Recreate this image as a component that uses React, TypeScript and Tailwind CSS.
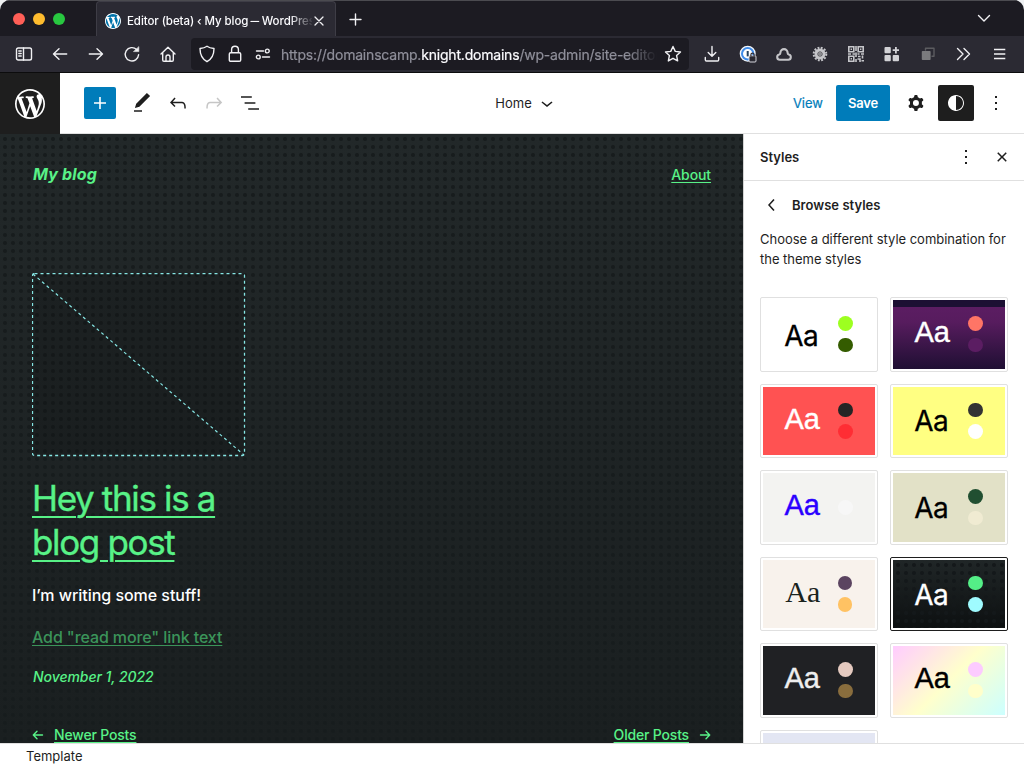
import React from "react";

type IconProps = { d: string; size?: number; className?: string };

function WpIcon({ d, size = 24, className = "" }: IconProps) {
  return (
    <svg viewBox="0 0 24 24" width={size} height={size} className={"shrink-0 " + className} fill="currentColor">
      <path fillRule="evenodd" clipRule="evenodd" d={d} />
    </svg>
  );
}

const icons = {
  plus: "M18 11.2h-5.2V6h-1.6v5.2H6v1.6h5.2V18h1.6v-5.2H18z",
  edit: "M20.1 5.1L16.9 2 6.2 12.7l-1.3 4.4 4.5-1.3L20.1 5.1zM4 20.8h8v-1.5H4v1.5z",
  undo: "M18.3 11.7c-.6-.6-1.4-.9-2.3-.9H6.7l2.9-3.3-1.1-1-4.5 5L8.5 16l1-1-2.7-2.7H16c.5 0 .9.2 1.3.5 1 1 1 3.4 1 4.5v.3h1.5v-.2c0-1.5 0-4.3-1.5-5.7z",
  redo: "M15.6 6.5l-1.1 1 2.9 3.3H8c-.9 0-1.7.3-2.3.9-1.4 1.5-1.4 4.2-1.4 5.6v.2h1.5v-.3c0-1.1 0-3.5 1-4.5.3-.3.7-.5 1.3-.5h9.2L14.5 15l1.1 1.1 4.6-4.6-4.6-5z",
  list: "M13.8 5.2H3v1.5h10.8V5.2zm-3.6 12v1.5H21v-1.5H10.2zm7.2-6H6.6v1.5h10.8v-1.5z",
  chevronDown: "M17.5 11.6L12 16l-5.5-4.4.9-1.2L12 14l4.5-3.6 1 1.2z",
  chevronLeft: "M14.6 7l-1.2-1L8 12l5.4 6 1.2-1-4.6-5z",
  cog: "M10.289 4.836A1 1 0 0111.275 4h1.306a1 1 0 01.987.836l.244 1.466c.787.26 1.503.679 2.108 1.218l1.393-.522a1 1 0 011.216.437l.653 1.13a1 1 0 01-.23 1.273l-1.148.944a6.025 6.025 0 010 2.435l1.149.946a1 1 0 01.23 1.272l-.653 1.13a1 1 0 01-1.216.437l-1.394-.522c-.605.54-1.32.958-2.108 1.218l-.244 1.466a1 1 0 01-.987.836h-1.306a1 1 0 01-.986-.836l-.244-1.466a5.995 5.995 0 01-2.108-1.218l-1.394.522a1 1 0 01-1.217-.436l-.653-1.131a1 1 0 01.23-1.272l1.149-.946a6.026 6.026 0 010-2.435l-1.148-.944a1 1 0 01-.23-1.272l.653-1.131a1 1 0 011.217-.437l1.393.522a5.994 5.994 0 012.108-1.218l.244-1.466zM14.929 12a3 3 0 11-6 0 3 3 0 016 0z",
  styles: "M12 4c-4.4 0-8 3.6-8 8v.1c0 4.1 3.2 7.5 7.2 7.9h.8c4.4 0 8-3.6 8-8s-3.6-8-8-8zm0 15V5c3.9 0 7 3.1 7 7s-3.1 7-7 7z",
  more: "M13 19h-2v-2h2v2zm0-6h-2v-2h2v2zm0-6h-2V5h2v2z",
  close: "M12 13.06l3.712 3.713 1.061-1.06L13.061 12l3.712-3.712-1.06-1.06L12 10.938 8.288 7.227l-1.061 1.06L10.939 12l-3.712 3.712 1.06 1.061L12 13.061z",
};

const wordpressPath =
  "M20 10c0-5.51-4.49-10-10-10C4.48 0 0 4.49 0 10c0 5.52 4.48 10 10 10 5.51 0 10-4.48 10-10zM7.78 15.37L4.37 6.22c.55-.02 1.17-.08 1.17-.08.5-.06.44-1.13-.06-1.11 0 0-1.45.11-2.37.11-.18 0-.37 0-.58-.01C4.12 2.69 6.87 1.11 10 1.11c2.33 0 4.45.87 6.05 2.34-.68-.11-1.65.39-1.65 1.58 0 .74.45 1.36.9 2.1.35.61.55 1.36.55 2.46 0 1.49-1.4 5-1.4 5l-3.03-8.37c.54-.02.82-.17.82-.17.5-.05.44-1.25-.06-1.22 0 0-1.44.12-2.38.12-.87 0-2.33-.12-2.33-.12-.5-.03-.56 1.2-.06 1.22l.92.08 1.26 3.41zM17.41 10c.24-.64.74-1.87.43-4.25.7 1.29 1.05 2.71 1.05 4.25 0 3.29-1.73 6.24-4.4 7.78.97-2.59 1.94-5.2 2.92-7.78zM6.1 18.09C3.12 16.65 1.11 13.53 1.11 10c0-1.3.23-2.48.72-3.59C3.25 10.3 4.67 14.2 6.1 18.09zm4.03-6.63l2.58 6.98c-.86.29-1.76.45-2.71.45-.79 0-1.57-.11-2.29-.33.81-2.38 1.63-4.74 2.42-7.1z";

function ToolIcon({ children, className = "" }: { children: React.ReactNode; className?: string }) {
  return (
    <div className={"flex w-9 shrink-0 items-center justify-center " + className}>
      <svg width="18" height="18" viewBox="0 0 18 18" fill="none" stroke="#f1f1f4" strokeWidth="1.4" strokeLinecap="round" strokeLinejoin="round">
        {children}
      </svg>
    </div>
  );
}

function TabStrip() {
  return (
    <div className="flex h-9 shrink-0 border-t border-[#4b4b50] bg-[#1c1b22]">
      <div className="flex w-24 shrink-0 items-center gap-2 pl-[13px]">
        <span className="size-3 rounded-full bg-[#ff5f57]" />
        <span className="size-3 rounded-full bg-[#febc2e]" />
        <span className="size-3 rounded-full bg-[#28c840]" />
      </div>
      <div className="flex w-60 shrink-0 items-center rounded-t-[4px] border-x border-t border-[#3e3d46] bg-[#2b2a33] pt-1 pl-2">
        <svg width="16" height="16" viewBox="0 0 20 20" className="shrink-0">
          <circle cx="10" cy="10" r="9.8" fill="#0073aa" />
          <path d={wordpressPath} fill="#fff" />
        </svg>
        <span className="mt-px ml-[6px] w-[185px] overflow-hidden text-[11.5px] font-medium tracking-[-0.08px] whitespace-nowrap text-[#fbfbfe] [mask-image:linear-gradient(90deg,#000_163px,transparent_187px)]">
          Editor (beta) ‹ My blog <span className="-mx-[2px] inline-block scale-x-75">—</span> WordPress
        </span>
        <svg width="10" height="10" viewBox="0 0 10 10" className="ml-0.5 shrink-0" stroke="#f1f1f4" strokeWidth="1.3" strokeLinecap="round">
          <path d="M1 1l8 8M9 1L1 9" />
        </svg>
      </div>
      <div className="flex flex-1 items-center justify-between pt-0.5 pr-[33px] pl-[13px]">
        <svg width="13" height="13" viewBox="0 0 13 13" stroke="#f1f1f4" strokeWidth="1.4" strokeLinecap="round">
          <path d="M6.5 1v11M1 6.5h11" />
        </svg>
        <svg width="14" height="9" viewBox="0 0 14 9" fill="none" stroke="#f1f1f4" strokeWidth="1.4" strokeLinecap="round" strokeLinejoin="round" className="-mt-0.5">
          <path d="M1.5 1.5L7 7l5.5-5.5" />
        </svg>
      </div>
    </div>
  );
}

function NavBar() {
  return (
    <div className="flex h-[37px] shrink-0 items-center border-b border-[#0c0c0d] bg-[#2b2a33] pl-1.5">
      <ToolIcon>
        <rect x="1.5" y="3" width="15" height="12" rx="1.8" />
        <path d="M8.5 3v12M3.8 6h2.4M3.8 8.5h2.4M3.8 11h2.4" />
      </ToolIcon>
      <ToolIcon><path d="M15.7 9H2.5M8 3.7L2.5 9 8 14.3" /></ToolIcon>
      <ToolIcon><path d="M2.3 9h13.2M10 3.7L15.5 9 10 14.3" /></ToolIcon>
      <ToolIcon>
        <path d="M15.6 9.8a6.7 6.7 0 1 1-2-5.3" />
        <path d="M10.8 6.6h5V2z" fill="#f1f1f4" strokeWidth=".6" />
      </ToolIcon>
      <ToolIcon>
        <path d="M2 9L9 2.2 16 9M3.7 7.8V15c0 .8.4 1.2 1.2 1.2h8.2c.8 0 1.2-.4 1.2-1.2V7.8M7 16v-4a2 2 0 0 1 4 0v4" />
      </ToolIcon>
      <div className="ml-[5px] flex h-8 w-[498px] shrink-0 items-center rounded bg-[#1c1b22]">
        <div className="flex w-8 shrink-0 justify-center">
          <svg width="18" height="18" viewBox="0 0 18 18" fill="none" stroke="#f1f1f4" strokeWidth="1.4" strokeLinejoin="round">
            <path d="M9 1.3c2 1.5 4.4 2 7 2.2 0 6.5-1.8 10.3-7 13.2C3.8 13.8 2 10 2 3.5 4.6 3.3 7 2.8 9 1.3z" />
          </svg>
        </div>
        <div className="flex w-6 shrink-0 justify-center">
          <svg width="14" height="18" viewBox="0 0 14 18" fill="none" stroke="#f1f1f4" strokeWidth="1.4" strokeLinejoin="round">
            <rect x="1.3" y="7.7" width="11.4" height="8.6" rx="1.4" />
            <path d="M3.6 7.5V4.6a3.4 3.4 0 0 1 6.8 0v2.9" />
          </svg>
        </div>
        <div className="ml-0.5 flex w-7 shrink-0 justify-center">
          <svg width="16" height="12" viewBox="0 0 16 12" fill="none" stroke="#f1f1f4" strokeWidth="1.4" strokeLinecap="round">
            <path d="M1.5 3h7M7.5 9h7" />
            <circle cx="12.3" cy="3" r="1.9" />
            <circle cx="3.3" cy="9" r="1.9" />
          </svg>
        </div>
        <span className="ml-1 w-[377px] shrink-0 overflow-hidden text-[14px] tracking-[-0.2px] whitespace-nowrap text-[#8f8f9a] [-webkit-text-stroke:0.2px_currentColor] [mask-image:linear-gradient(90deg,#000_346px,transparent_376px)]">
          https://domainscamp.<span className="text-[#fbfbfe]">knight.domains</span>/wp-admin/site-editor
        </span>
        <svg width="18" height="18" viewBox="0 0 18 18" className="ml-[6px] shrink-0" fill="none" stroke="#f1f1f4" strokeWidth="1.4" strokeLinejoin="round">
          <path d="M9 1.5l2.25 4.9 5.25.6-3.9 3.6 1.05 5.3L9 13.3l-4.65 2.6 1.05-5.3L1.5 7l5.25-.6z" />
        </svg>
      </div>
      <ToolIcon className="ml-[5px]"><path d="M9 1.5V11M5.2 7.5L9 11.2l3.8-3.7M2.3 12.5v2.3c0 .8.3 1.2 1.2 1.2h11c.9 0 1.2-.4 1.2-1.2v-2.3" /></ToolIcon>
      <ToolIcon>
        <circle cx="8.7" cy="8.7" r="8" fill="#f4f7fb" stroke="none" />
        <circle cx="8.7" cy="8.7" r="5.7" fill="#fff" stroke="#3f8be8" strokeWidth="2" />
        <path d="M8.7 6v5.4" stroke="#23415f" strokeWidth="2" strokeLinecap="butt" />
        <rect x="10" y="10.8" width="7" height="6.2" rx="1" fill="#2b2a33" stroke="#e8e8ee" strokeWidth=".9" />
        <path d="M11.9 11V9.8a1.6 1.6 0 0 1 3.2 0V11" stroke="#2b2a33" strokeWidth="1.2" />
      </ToolIcon>
      <ToolIcon><path stroke="#c4c4c8" strokeWidth="2.1" d="M4.7 14.8h8.6a2.7 2.7 0 0 0 .5-5.3c-.9-.3-1.2-.8-1.2-1.8a3.6 3.6 0 0 0-7.2 0c0 1-.3 1.5-1.2 1.8a2.7 2.7 0 0 0 .5 5.3z" /></ToolIcon>
      <ToolIcon>
        <circle cx="9" cy="9" r="6.3" stroke="#c4c4c8" strokeWidth="2" strokeDasharray="1.9 1.4" strokeLinecap="butt" />
        <circle cx="9" cy="9" r="4" stroke="#c4c4c8" strokeWidth="3" />
        <circle cx="9" cy="9" r="2.2" fill="#8a8a8e" stroke="none" />
      </ToolIcon>
      <ToolIcon>
        <g stroke="#c6c6ca" strokeWidth="1.6" strokeLinecap="butt" strokeLinejoin="miter">
          <path d="M1.8 1.8h5v5h-5zM11.2 1.8h5v5h-5zM1.8 11.2h5v5h-5z" />
          <path d="M3.6 4.3H5M13 4.3h1.4M3.6 13.7H5M1 9h3M5.5 9H8M9 1v5M9 7.5V12M10.5 9h2M14 9h3M11 11.5h2.5M15.5 10.5v3M10.5 14H13v3M9 14v3M14.5 15.8H17" />
        </g>
      </ToolIcon>
      <ToolIcon>
        <g fill="#d2d2d6" stroke="none">
          <rect x="1.5" y="2" width="6.3" height="6.3" rx="1" />
          <rect x="1.5" y="10" width="6.3" height="6.3" rx="1" />
          <rect x="9.7" y="10" width="6.3" height="6.3" rx="1" />
          <path d="M12 2h1.8v2.3H16v1.8h-2.2v2.3H12V6.1H9.7V4.3H12z" />
        </g>
      </ToolIcon>
      <ToolIcon>
        <path d="M6.5 5V3.2H15v8h-2" stroke="#5c5c60" />
        <rect x="2.8" y="6" width="8.8" height="9" rx=".8" fill="#7b7b7e" stroke="none" />
      </ToolIcon>
      <ToolIcon><path d="M2.5 3.5L8 9l-5.5 5.5M9 3.5L14.5 9 9 14.5" /></ToolIcon>
      <ToolIcon><path d="M3 4.5h11.3M3 9h11.3M3 13.5h11.3" strokeLinecap="butt" /></ToolIcon>
    </div>
  );
}

function EditorHeader() {
  return (
    <div className="flex h-[61px] shrink-0 bg-white">
      <div className="flex w-[60px] shrink-0 items-center justify-center bg-[#1e1e1e] text-white">
        <svg viewBox="-2 -2 24 24" width="36" height="36" fill="currentColor">
          <path d={wordpressPath} />
        </svg>
      </div>
      <div className="grid flex-1 grid-cols-[1fr_auto_1fr] items-center border-b border-[#e0e0e0]">
        <div className="flex items-center gap-3 pl-6 text-[#1e1e1e]">
          <div className="mr-0.5 flex size-8 items-center justify-center rounded-[2px] bg-[#007cba] text-white">
            <WpIcon d={icons.plus} />
          </div>
          <WpIcon d={icons.edit} />
          <WpIcon d={icons.undo} />
          <WpIcon d={icons.redo} className="text-[#c6c6c6]" />
          <WpIcon d={icons.list} />
        </div>
        <div className="mr-[30px] flex items-center gap-[3px] text-[13px] text-[#1e1e1e]">
          <span className="pt-0.5">Home</span>
          <WpIcon d={icons.chevronDown} />
        </div>
        <div className="flex items-center justify-end">
          <span className="mt-0.5 mr-[13px] text-[13px] text-[#007cba] [-webkit-text-stroke:0.2px_currentColor]">View</span>
          <div className="mr-3.5 flex h-9 w-[54px] items-center justify-center rounded-[2px] bg-[#007cba] pt-0.5 text-[13px] font-semibold tracking-[-0.2px] text-white">Save</div>
          <WpIcon d={icons.cog} className="text-[#1e1e1e]" />
          <div className="mr-2.5 ml-2.5 flex size-9 items-center justify-center rounded-[2px] bg-[#1e1e1e] text-white">
            <WpIcon d={icons.styles} />
          </div>
          <WpIcon d={icons.more} className="mr-4 text-[#1e1e1e]" />
        </div>
      </div>
    </div>
  );
}

function Canvas() {
  return (
    <div className="flex w-[743px] shrink-0 flex-col overflow-hidden bg-[radial-gradient(circle_at_4px_4px,#171c1d_0_1.5px,transparent_2.5px),linear-gradient(#222829,#1a1f20)] bg-[size:8px_8px,auto] bg-[position:1px_1px,0_0] px-8 text-[#58f287]">
      <div className="mt-7 flex h-6 items-center justify-between">
        <span className="pl-px text-[16px] font-bold tracking-[0.15px] italic">My blog</span>
        <span className="text-[14px] font-medium tracking-[-0.1px] underline underline-offset-2">About</span>
      </div>
      <svg width="214" height="184" viewBox="0 0 214 184" className="mt-[87px] shrink-0" fill="none" stroke="#86e6e4" strokeDasharray="3 3">
        <rect x=".5" y=".5" width="212" height="182" rx="2" fill="#000" fillOpacity=".12" strokeWidth="1.3" />
        <path d="M1 1l211 181" strokeWidth="1.2" />
      </svg>
      <div className="mt-5 text-[35px] leading-[43.5px] tracking-[-1.35px] underline decoration-2 underline-offset-[5px] [-webkit-text-stroke:0.35px_currentColor]">
        Hey this is a<br />blog post
      </div>
      <p className="mt-[19px] text-[16px] leading-6 font-medium tracking-[-0.04px] text-white">I’m writing some stuff!</p>
      <p className="mt-[18px] text-[16px] leading-6 font-medium tracking-[-0.1px] text-[#3b945a] underline underline-offset-2">Add "read more" link text</p>
      <p className="mt-4 pl-px text-[14px] leading-6 font-medium tracking-[-0.06px] italic">November 1, 2022</p>
      <div className="mt-[34px] flex justify-between text-[14px] leading-6 font-medium tracking-[-0.18px]">
        <span className="flex items-center gap-2.5">
          <Arrow d="M10.5 6h-9M5 2.2L1.3 6 5 9.8" />
          <span className="underline underline-offset-2">Newer Posts</span>
        </span>
        <span className="flex items-center gap-2.5">
          <span className="underline underline-offset-2">Older Posts</span>
          <Arrow d="M1.5 6h9M7 2.2L10.7 6 7 9.8" />
        </span>
      </div>
    </div>
  );
}

function Arrow({ d }: { d: string }) {
  return (
    <svg width="12" height="12" viewBox="0 0 12 12" fill="none" stroke="currentColor" strokeWidth="1.4" strokeLinecap="round" strokeLinejoin="round">
      <path d={d} />
    </svg>
  );
}

const sans = "-ml-px mr-px -translate-x-px font-['Inter',sans-serif] text-[28px] tracking-[-0.6px] [-webkit-text-stroke:0.3px_currentColor]";
const grotesk = "-mt-[3px] -translate-x-px font-['Liberation_Sans',sans-serif] text-[29px] [-webkit-text-stroke:0.4px_currentColor]";

const variations = [
  { bg: "bg-white", text: "text-black pt-[3px] " + sans, dots: ["bg-[#9dff20]", "bg-[#345c00]"] },
  { bg: "bg-[linear-gradient(#1c1033_0_7px,#5b1d62_7px,#571c5e_22px,#1f0f33)]", text: "text-white " + grotesk, dots: ["bg-[#ff7566]", "bg-[#5b1d62]"] },
  { bg: "bg-[#ff5252]", text: "text-white " + grotesk, dots: ["bg-[#252525]", "bg-[#ff2d34]"] },
  { bg: "bg-[#ffff82]", text: "text-black " + sans, dots: ["bg-[#333]", "bg-white"] },
  { bg: "bg-[#f3f3f1]", text: "text-[#2a00ff] " + grotesk, dots: ["bg-[#f7f7f7]"] },
  { bg: "bg-[#e2e1c7]", text: "text-black pt-0.5 " + sans, dots: ["bg-[#214f31]", "bg-[#f0ebd2]"] },
  { bg: "bg-[#f8f2ec]", text: "text-[#1a231d] -ml-px -mt-[3px] font-['Liberation_Serif',serif] text-[30px]", dots: ["bg-[#5b4460]", "bg-[#ffc263]"] },
  { bg: "bg-[radial-gradient(circle_at_4px_4px,#14181a_0_1.5px,transparent_2.5px),linear-gradient(#202627,#0d1011)] bg-[size:8px_8px,auto] bg-[position:1px_1px,0_0]", text: "text-white pt-[3px] " + sans, dots: ["bg-[#54ef87]", "bg-[#9ffbff]"], active: true },
  { bg: "bg-[#202124]", text: "text-[#eee] " + grotesk, dots: ["bg-[#e5cac0]", "bg-[#896d3d]"] },
  { bg: "bg-[linear-gradient(135deg,#ffccff,#ffffcc_50%,#ccffff)]", text: "text-black " + grotesk, dots: ["bg-[#fccbff]", "bg-[#ffffcb]"] },
];

function Sidebar() {
  return (
    <div className="flex flex-1 flex-col overflow-hidden border-l border-[#d4d4d4] bg-white text-[13px] text-[#1e1e1e]">
      <div className="flex h-[47px] shrink-0 items-center border-b border-[#e0e0e0] pr-2.5 pl-4">
        <span className="flex-1 pt-0.5 font-semibold">Styles</span>
        <WpIcon d={icons.more} className="mr-3" />
        <WpIcon d={icons.close} />
      </div>
      <div className="mt-3 flex h-6 shrink-0 items-center pl-4">
        <WpIcon d={icons.chevronLeft} />
        <span className="ml-2 pt-0.5 font-semibold tracking-[0.03px]">Browse styles</span>
      </div>
      <p className="mt-[13px] pr-2 pl-4 leading-[19.5px] tracking-[-0.02px]">
        Choose a different style combination for the theme styles
      </p>
      <div className="mt-[28px] grid grid-cols-[118px_118px] auto-rows-[74.5px] gap-3 pl-4">
        {variations.map((v, i) => (
          <div key={i} className={"rounded-[2px] border p-0.5 " + (v.active ? "border-[#1e1e1e]" : "border-[#e0e0e0]")}>
            <div className={"flex h-full items-center justify-center gap-[17px] " + v.bg}>
              <span className={"w-9 text-center leading-none " + v.text}>Aa</span>
              <div className="flex flex-col gap-[7px]">
                {v.dots.map((dot) => (
                  <span key={dot} className={"size-[14.5px] rounded-full " + dot} />
                ))}
              </div>
            </div>
          </div>
        ))}
        <div className="rounded-[2px] border border-[#e0e0e0] p-0.5">
          <div className="h-full bg-[#e3e6f3]" />
        </div>
      </div>
    </div>
  );
}

export default function App() {
  return (
    <div className="h-[768px] w-[1024px] overflow-hidden bg-[#eef0f2] font-['Inter',sans-serif]">
      <div className="flex h-full flex-col overflow-hidden rounded-t-[10px]">
        <TabStrip />
        <NavBar />
        <EditorHeader />
        <div className="flex h-[609px] shrink-0">
          <Canvas />
          <Sidebar />
        </div>
        <div className="flex h-[25px] shrink-0 items-center border-t border-[#e0e0e0] bg-white pt-px pl-[26px] text-[13px] text-[#1e1e1e]">Template</div>
      </div>
    </div>
  );
}
